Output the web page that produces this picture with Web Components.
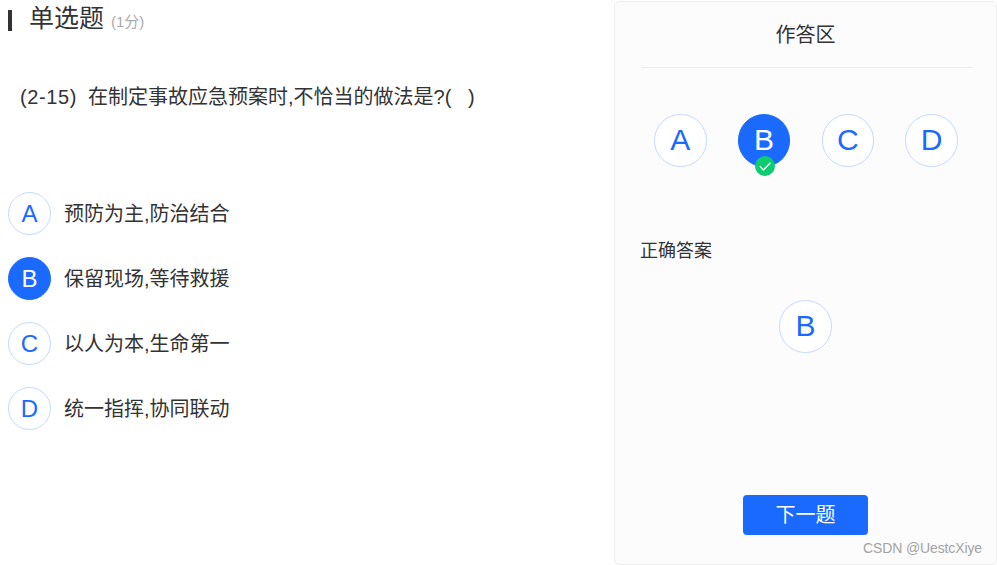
<!DOCTYPE html>
<html lang="zh">
<head>
<meta charset="utf-8">
<title>单选题</title>
<style>
    html, body { margin: 0; height: 100%; background: #fff; }
    body {
        font-family: "Liberation Sans", "Noto Sans CJK SC", sans-serif;
        color: #333;
        overflow: hidden;
    }
</style>
</head>
<body>
<exam-page>
    <question-pane slot="left" title-text="单选题" score="(1分)" number="(2-15)" stem="在制定事故应急预案时,不恰当的做法是?(&nbsp;&nbsp;&nbsp;)">
        <option-row letter="A">预防为主,防治结合</option-row>
        <option-row letter="B" selected>保留现场,等待救援</option-row>
        <option-row letter="C">以人为本,生命第一</option-row>
        <option-row letter="D">统一指挥,协同联动</option-row>
    </question-pane>
    <answer-panel slot="right"></answer-panel>
</exam-page>

<script>
class ExamPage extends HTMLElement {
    constructor() {
        super()
        this.attachShadow({ mode: "open" })
        this.shadowRoot.innerHTML = `
            <style>
                :host { display: flex; width: 997px; height: 565px; position: relative; }
                ::slotted([slot="left"]) { flex: 0 0 614px; }
                ::slotted([slot="right"]) { flex: 0 0 383px; }
                #mark {
                    position: absolute; left: 863px; top: 540px;
                    font-size: 14px; line-height: 16px; letter-spacing: -0.12px;
                    color: #a3a3a3; white-space: nowrap;
                }
            </style>
            <slot name="left"></slot>
            <slot name="right"></slot>
            <div id="mark">CSDN @UestcXiye</div>
        `
    }
}

class LetterCircle extends HTMLElement {
    static get observedAttributes() { return ["letter"] }

    constructor() {
        super()
        this.attachShadow({ mode: "open" })
    }

    connectedCallback() { this.render() }
    attributeChangedCallback() { this.render() }

    render() {
        this.shadowRoot.innerHTML = `
            <style>
                :host {
                    --size: 43px;
                    display: block; position: relative; box-sizing: border-box;
                    flex: none;
                    width: var(--size); height: var(--size);
                }
                #disc {
                    box-sizing: border-box; width: 100%; height: 100%;
                    display: flex; align-items: center; justify-content: center;
                    border: 1px solid #c6d9fd; border-radius: 50%;
                    background: #fff; color: #1a6aff;
                    font-size: var(--letter, 24px);
                }
                :host([active]) #disc { background: #1a6aff; border-color: #1a6aff; color: #fff; }
            </style>
            <div id="disc">${this.getAttribute("letter") ?? ""}</div>
            <slot></slot>
        `
    }
}

class OptionRow extends HTMLElement {
    constructor() {
        super()
        this.attachShadow({ mode: "open" })
    }

    connectedCallback() {
        const active = this.hasAttribute("selected") ? "active" : ""
        this.shadowRoot.innerHTML = `
            <style>
                :host {
                    display: flex; align-items: center; gap: 13px;
                    height: 43px; font-size: 20px; color: #333;
                }
                span { padding-bottom: 3px; }
            </style>
            <letter-circle letter="${this.getAttribute("letter")}" ${active}></letter-circle>
            <span><slot></slot></span>
        `
    }
}

class QuestionPane extends HTMLElement {
    constructor() {
        super()
        this.attachShadow({ mode: "open" })
    }

    connectedCallback() {
        this.shadowRoot.innerHTML = `
            <style>
                :host { display: block; box-sizing: border-box; padding: 10px 0 0 8px; }
                header { display: flex; align-items: baseline; height: 21px; }
                #bar { flex: none; width: 4px; height: 21px; background: #333; align-self: flex-start; }
                h1 { margin: 0 7px 0 17px; font-size: 25px; font-weight: 400; line-height: 17px; color: #333; }
                small { font-size: 15px; color: #aaa; }
                p { display: flex; gap: 11px; margin: 54px 0 0 12px; font-size: 20px; line-height: 24px; color: #333; }
                #number { letter-spacing: 0.6px; }
                #options { display: flex; flex-direction: column; gap: 22px; margin-top: 83px; }
            </style>
            <header>
                <div id="bar"></div>
                <h1>${this.getAttribute("title-text")}</h1>
                <small>${this.getAttribute("score")}</small>
            </header>
            <p><span id="number">${this.getAttribute("number")}</span><span>${this.getAttribute("stem")}</span></p>
            <div id="options"><slot></slot></div>
        `
    }
}

class AnswerPanel extends HTMLElement {
    constructor() {
        super()
        this.attachShadow({ mode: "open" })
        this.shadowRoot.innerHTML = `
            <style>
                :host {
                    display: flex; flex-direction: column; box-sizing: border-box;
                    margin: 1px 0 0; height: 564px; padding: 0 24px 29px 25px;
                    background: #fcfcfc; border: 1px solid #eeeeee; border-radius: 5px;
                    font-size: 20px; color: #333;
                }
                h2 {
                    margin: 0 -1px 0 1px; height: 66px; box-sizing: border-box; padding: 20px 3px 0 0;
                    font-size: 20px; line-height: 26px; font-weight: 400; text-align: center;
                    border-bottom: 1px solid #ebedf0;
                }
                #choices { display: flex; justify-content: space-between; margin: 46px 14.2px 0 14px; }
                letter-circle { --size: 52.5px; --letter: 30px; }
                #badge {
                    position: absolute; left: 50%; bottom: -9px; margin-left: -9px;
                    display: block; width: 20px; height: 20px;
                }
                h3 { margin: 71px 0 0; font-size: 18px; line-height: 26px; font-weight: 400; color: #333; }
                #right { display: flex; justify-content: center; margin-top: 36.5px; padding-right: 1px; }
                button {
                    align-self: center; margin: auto 1px 0 0;
                    width: 125px; height: 40px; padding: 0 0 3px;
                    border: 0; border-radius: 4px; background: #1a6aff; color: #fff;
                    font: inherit; font-size: 20px;
                }
            </style>
            <h2>作答区</h2>
            <div id="choices">
                <letter-circle letter="A"></letter-circle>
                <letter-circle letter="B" active>
                    <svg id="badge" viewBox="0 0 20 20">
                        <circle cx="10" cy="10" r="10" fill="#0ecb6f"/>
                        <path d="M4.8 10.4 8.4 14 15.4 6.8" fill="none" stroke="#fff" stroke-width="1.3"/>
                    </svg>
                </letter-circle>
                <letter-circle letter="C"></letter-circle>
                <letter-circle letter="D"></letter-circle>
            </div>
            <h3>正确答案</h3>
            <div id="right"><letter-circle letter="B"></letter-circle></div>
            <button>下一题</button>
        `
    }
}

customElements.define("letter-circle", LetterCircle)
customElements.define("option-row", OptionRow)
customElements.define("question-pane", QuestionPane)
customElements.define("answer-panel", AnswerPanel)
customElements.define("exam-page", ExamPage)
</script>
</body>
</html>
